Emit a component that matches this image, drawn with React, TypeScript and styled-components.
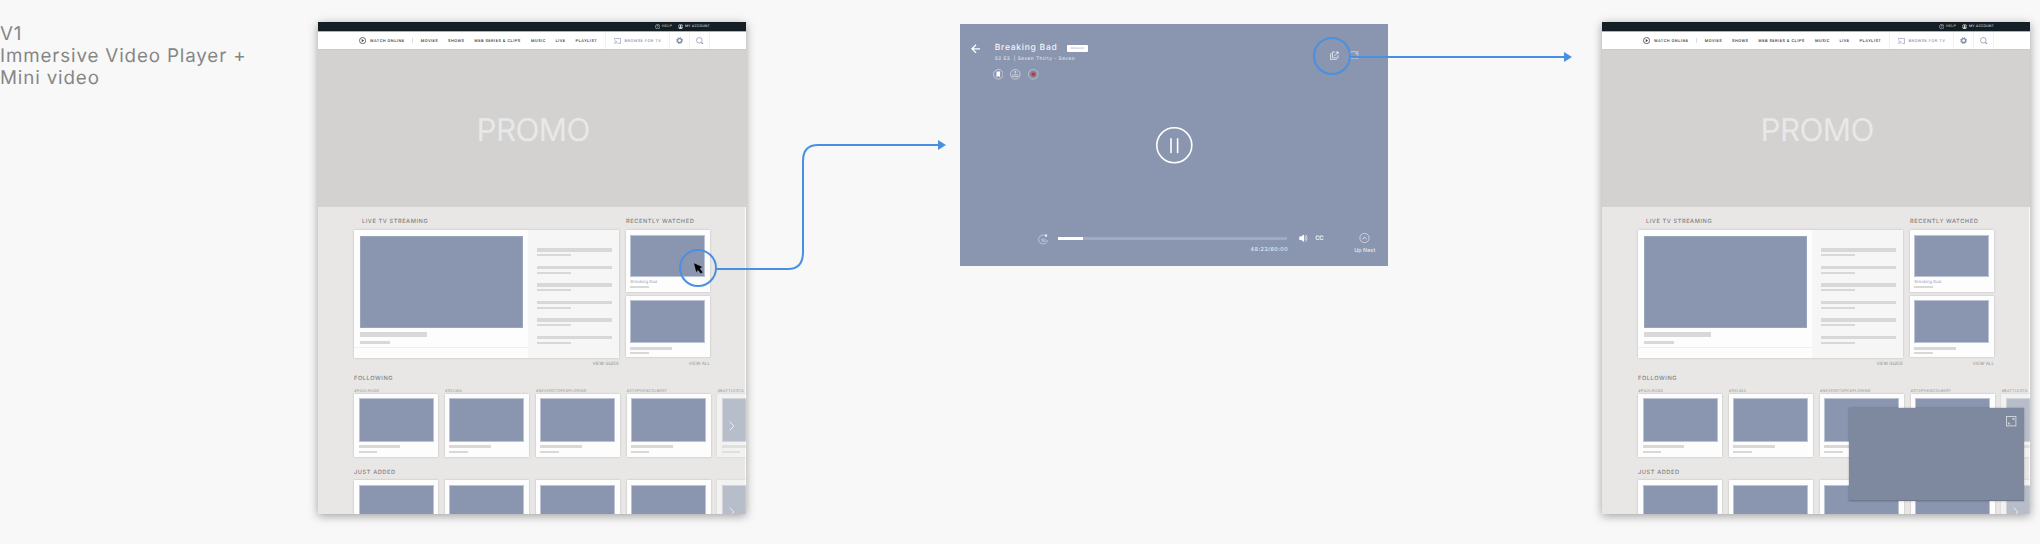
import React from "react";
import styled, { createGlobalStyle } from "styled-components";

const SLATE = "#8a95b0";
const ACCENT = "#4a90e2";

const GlobalStyle = createGlobalStyle`
  *, *::before, *::after { box-sizing: border-box; }
  html, body { margin: 0; padding: 0; background: #f8f8f8; }
  body {
    font-family: Inter, "Liberation Sans", sans-serif;
    text-rendering: geometricPrecision;
    overflow: hidden;
  }
  svg { display: block; flex: none; }
`;

const Canvas = styled.main`
  position: relative;
  display: flex;
  align-items: flex-start;
  width: 2040px;
  height: 544px;
  background: #f8f8f8;
  overflow: hidden;
`;

const Note = styled.h1`
  flex: none;
  width: 318px;
  margin: 0;
  padding-top: 23px;
  font-size: 18.8px;
  line-height: 22px;
  font-weight: 400;
  letter-spacing: 0.85px;
  color: #868686;
  white-space: nowrap;
`;

const Board = styled.section`
  position: relative;
  flex: none;
  width: 428px;
  height: 492px;
  margin-top: 22px;
  background: #e8e7e5;
  box-shadow: 0 2px 9px rgba(0, 0, 0, 0.36);
`;

const BoardClip = styled.div`
  height: 492px;
  overflow: hidden;
`;

const Text = styled.span<{ $w?: number; $size: number; $ls?: number; $color: string; $weight?: number }>`
  flex: none;
  display: block;
  width: ${(p) => (p.$w ? `${p.$w}px` : "auto")};
  font-size: ${(p) => p.$size}px;
  letter-spacing: ${(p) => p.$ls ?? 0}px;
  font-weight: ${(p) => p.$weight ?? 400};
  color: ${(p) => p.$color};
  white-space: nowrap;
`;

const TopBar = styled.div`
  display: flex;
  align-items: center;
  height: 9px;
  padding-left: 337px;
  background: #131e25;
  line-height: 9px;
  font-family: Roboto, sans-serif;
`;

const TopItem = styled.div<{ $w: number }>`
  display: flex;
  align-items: center;
  gap: 1.6px;
  width: ${(p) => p.$w}px;
`;

const Nav = styled.nav`
  display: flex;
  align-items: center;
  height: 18px;
  padding-left: 41px;
  border-top: 1px solid #aeb2b4;
  background: #fff;
  line-height: 17px;
  font-family: Roboto, sans-serif;
`;

const NavLinks = styled.div`
  display: flex;
  gap: 10.6px;
  width: 184.3px;
`;

const WatchOnline = styled.div`
  display: flex;
  align-items: center;
  gap: 3.8px;
  width: 53px;
`;

const Tick = styled.i`
  width: 1px;
  height: 5px;
  margin-right: 7.7px;
  background: #dcdcdc;
`;

const NavTool = styled.div<{ $w: number }>`
  display: flex;
  align-items: center;
  justify-content: center;
  gap: 3.3px;
  width: ${(p) => p.$w}px;
  height: 17px;
  border-left: 1px solid #f1f1f1;
`;

const NavEnd = styled.i`
  width: 1px;
  height: 17px;
  background: #f1f1f1;
`;

const Promo = styled.div`
  display: flex;
  align-items: center;
  justify-content: center;
  height: 158px;
  padding: 2px 0 0 2.5px;
  background: #d3d2d0;
  border-top: 1px solid #cbcac8;
  font-size: 31.3px;
  letter-spacing: -0.6px;
  color: #e8e8e8;
`;

const Body = styled.div`
  height: 307px;
  padding-left: 36px;
  border-right: 1px solid #fbfbfb;
  background: #e8e7e5;
`;

const Columns = styled.div`
  display: flex;
  gap: 6.7px;
`;

const Column = styled.div<{ $w: number }>`
  flex: none;
  width: ${(p) => p.$w}px;
`;

const ColumnTitle = styled.div<{ $indent?: number }>`
  height: 23px;
  padding: 10px 0 0 ${(p) => p.$indent ?? 0}px;
  line-height: 10px;
`;

const cardShadow = "0 0 2px rgba(0, 0, 0, 0.2)";

const LivePanel = styled.div`
  display: flex;
  height: 127.5px;
  background: #fdfdfd;
  box-shadow: ${cardShadow};
`;

const LiveMain = styled.div`
  width: 174.3px;
  padding: 6px 0 0 6px;
`;

const Thumb = styled.div<{ $w: number; $h: number; $edge: string }>`
  width: ${(p) => p.$w}px;
  height: ${(p) => p.$h}px;
  border: 1px solid ${(p) => p.$edge};
  background: ${SLATE};
`;

const Bar = styled.div<{ $w: number; $h: number; $mt: number }>`
  width: ${(p) => p.$w}px;
  height: ${(p) => p.$h}px;
  margin-top: ${(p) => p.$mt}px;
  background: #d8d8d8;
`;

const LiveFooter = styled.div`
  height: 10px;
  margin: 3.3px 0 0 -6px;
  border-top: 1px solid #efefef;
`;

const Schedule = styled.div`
  flex: 1;
  display: flex;
  flex-direction: column;
  gap: 9.5px;
  padding: 18.3px 0 0 9px;
  background: #f6f6f6;
`;

const ScheduleRow = styled.div`
  height: 8px;
`;

const CardFrame = styled.div<{ $h: number; $mt?: number }>`
  width: 84px;
  height: ${(p) => p.$h}px;
  margin-top: ${(p) => p.$mt ?? 0}px;
  padding: 4.5px 0 0 4.5px;
  background: #fdfdfd;
  box-shadow: ${cardShadow};
`;

const CardTitle = styled.div`
  height: 9.2px;
  padding-top: 2.9px;
  line-height: 6px;
`;

const ViewLink = styled.div`
  display: flex;
  justify-content: flex-end;
  height: 8.8px;
  padding-top: 4.2px;
  line-height: 6px;
`;

const SectionTitle = styled.div<{ $mt: number; $mb: number }>`
  height: 10px;
  margin: ${(p) => p.$mt}px 0 ${(p) => p.$mb}px;
  padding-top: 0.8px;
  line-height: 10px;
`;

const Strip = styled.div`
  display: flex;
  gap: 6.85px;
`;

const StripItem = styled.div<{ $faded?: boolean }>`
  position: relative;
  flex: none;
  width: 84px;
  ${(p) => p.$faded && `${CardFrame} { opacity: 0.5; }`}
`;

const Tag = styled.div`
  height: 6.7px;
  padding-top: 0.9px;
  line-height: 6px;
  font-family: Roboto, sans-serif;
`;

const ChevronSlot = styled.div<{ $top: number }>`
  position: absolute;
  left: 12px;
  top: ${(p) => p.$top}px;
`;

const MiniPlayer = styled.div`
  position: absolute;
  left: 246.5px;
  top: 386.3px;
  display: flex;
  justify-content: flex-end;
  width: 175px;
  height: 92.5px;
  padding: 8px 7px;
  background: #7e889e;
  border-bottom: 1px solid #6f788b;
  box-shadow: 0 0 2px rgba(0, 0, 0, 0.3);
`;

const Player = styled.section`
  flex: none;
  width: 428px;
  height: 242px;
  margin: 24px 214px 0;
  background: ${SLATE};
`;

const PlayerHeader = styled.header`
  display: flex;
  height: 102.5px;
  padding-left: 10.7px;
`;

const BackSlot = styled.div`
  width: 24px;
  padding-top: 20px;
`;

const Info = styled.div`
  width: 335.3px;
  padding-top: 18.8px;
`;

const TitleRow = styled.div`
  display: flex;
  align-items: center;
  gap: 10px;
  height: 12px;
  line-height: 13px;
`;

const Badge = styled.div`
  width: 21.3px;
  height: 7px;
  border-radius: 1px;
  background: #fff;
  line-height: 7px;
  text-align: center;
`;

const Subtitle = styled.div`
  margin-top: 1px;
  line-height: 6px;
`;

const Actions = styled.div`
  display: flex;
  gap: 7.15px;
  margin: 7.2px 0 0 -2px;
`;

const WindowTools = styled.div`
  display: flex;
  gap: 11.5px;
  padding-top: 26.6px;
`;

const PauseSlot = styled.div`
  display: flex;
  justify-content: center;
  height: 37px;
`;

const Controls = styled.footer`
  display: flex;
  align-items: flex-start;
  padding: 69px 0 0 78.3px;
`;

const Replay = styled.div`
  width: 19.7px;
  padding-top: 1px;
`;

const Timeline = styled.div`
  width: 229px;
  margin-right: 11.6px;
  padding-top: 4.8px;
`;

const Track = styled.div`
  height: 3px;
  background: #a1aac0;
`;

const Played = styled.div`
  width: 25.3px;
  height: 3px;
  background: #fff;
`;

const Time = styled.div`
  display: flex;
  justify-content: flex-end;
  margin-top: 6.8px;
  line-height: 6px;
`;

const Volume = styled.div`
  width: 16.7px;
  padding-top: 1.8px;
`;

const Captions = styled.div`
  width: 39px;
  line-height: 12px;
`;

const UpNext = styled.div`
  display: flex;
  flex-direction: column;
  align-items: center;
  gap: 4px;
  width: 21px;
  line-height: 7px;
`;

const Connectors = styled.svg`
  position: absolute;
  left: 0;
  top: 0;
`;

const NAV = [
  { t: "MOVIES", w: 16.7 },
  { t: "SHOWS", w: 15.6 },
  { t: "WEB SERIES & CLIPS", w: 46.3 },
  { t: "MUSIC", w: 13.8 },
  { t: "LIVE", w: 9.5 },
  { t: "PLAYLIST", w: 21 },
];
const TAGS = [
  { t: "#PAULRUDD", ls: 0.33 },
  { t: "#SELMA", ls: 0.3 },
  { t: "#NEVERSTOPEXPLORING", ls: 0.25 },
  { t: "#STEPHENCOLBERT", ls: 0.25 },
  { t: "#BATTLESTA", ls: 0.28 },
];

const NavText = ({ children, w, color = "#36414a" }: { children: string; w?: number; color?: string }) => (
  <Text $size={4} $ls={0.49} $weight={500} $w={w} $color={color}>{children}</Text>
);

const Heading = ({ children }: { children: string }) => (
  <Text $size={5.7} $ls={0.55} $weight={500} $color="#808285">{children}</Text>
);

const Chevron = ({ top }: { top: number }) => (
  <ChevronSlot $top={top}>
    <svg width="6" height="10" viewBox="0 0 6 10" fill="none" stroke="#eef0f4" strokeWidth="0.9">
      <path d="M0.8 0.6 L4.8 5 L0.8 9.4" />
    </svg>
  </ChevronSlot>
);

const VideoCard = ({ h, thumb, title, mt }: { h: number; thumb: number; title?: string; mt?: number }) => (
  <CardFrame $h={h} $mt={mt}>
    <Thumb $w={75} $h={thumb} $edge="#bcc3d3" />
    {title ? (
      <CardTitle><Text $size={4.3} $ls={-0.04} $color="#98a1bd">{title}</Text></CardTitle>
    ) : (
      <Bar $w={41.7} $h={3} $mt={3.8} />
    )}
    <Bar $w={18.4} $h={2} $mt={title ? 0 : 2.2} />
  </CardFrame>
);

function HomeBoard({ mini }: { mini?: boolean }) {
  return (
    <Board>
      <BoardClip>
        <TopBar>
          <TopItem $w={23.2}>
            <svg width="5.4" height="5.4" viewBox="0 0 10 10" fill="none" stroke="#b7bcbf" strokeWidth="1.2">
              <circle cx="5" cy="5" r="4.2" />
              <path d="M3.7 4 Q3.8 2.7 5 2.7 T6.2 4 Q6.2 4.7 5 5.3 V6.1 M5 6.9 V7.7" />
            </svg>
            <Text $size={3.7} $ls={0.3} $weight={500} $color="#b9bec1">HELP</Text>
          </TopItem>
          <TopItem $w={33}>
            <svg width="5.2" height="5.2" viewBox="0 0 10 10">
              <circle cx="5" cy="5" r="4.3" fill="none" stroke="#d4d7d9" strokeWidth="1.2" />
              <circle cx="5" cy="3.8" r="1.8" fill="#e2e4e5" />
              <path d="M2 8 Q2.4 5.6 5 5.6 T8 8 Q5 10.4 2 8Z" fill="#e2e4e5" />
            </svg>
            <Text $size={3.7} $ls={0.17} $weight={500} $color="#b9bec1">MY ACCOUNT</Text>
          </TopItem>
        </TopBar>
        <Nav>
          <WatchOnline>
            <svg width="7.2" height="7.2" viewBox="0 0 14 14">
              <circle cx="7" cy="7" r="6" fill="none" stroke="#35434b" strokeWidth="1.5" />
              <path d="M5.4 4 L9.8 7 L5.4 10Z" fill="#35434b" />
            </svg>
            <NavText>WATCH ONLINE</NavText>
          </WatchOnline>
          <Tick />
          <NavLinks>
            {NAV.map((n) => <NavText key={n.t} w={n.w}>{n.t}</NavText>)}
          </NavLinks>
          <NavTool $w={64.4}>
            <svg width="7" height="6" viewBox="0 0 14 12" fill="none" stroke="#8f99b8" strokeWidth="1.3">
              <path d="M1 3.5 V1 H13 V11 H8.5 M1 5.5 Q6.5 5.5 6.5 11 M1 8.2 Q3.8 8.2 3.8 11" />
              <path d="M0.6 11.4 h1.6 v-1.4 h-1.6z" fill="#8f99b8" stroke="none" />
            </svg>
            <NavText color="#8f9abb">BROWSE FOR TV</NavText>
          </NavTool>
          <NavTool $w={20}>
            <svg width="7.2" height="7.2" viewBox="0 0 14 14" fill="none" stroke="#7b87a9">
              <circle cx="7" cy="7" r="3.9" strokeWidth="2.2" />
              <circle cx="7" cy="7" r="5.9" strokeWidth="1.9" strokeDasharray="2.32 2.32" />
            </svg>
          </NavTool>
          <NavTool $w={20}>
            <svg width="7.6" height="7.6" viewBox="0 0 15 15" fill="none" stroke="#8690b0" strokeWidth="1.4">
              <circle cx="6.5" cy="6.5" r="5.5" />
              <path d="M10.8 10.8 L14 14" strokeWidth="2.2" />
            </svg>
          </NavTool>
          <NavEnd />
        </Nav>
        <Promo>PROMO</Promo>
        <Body>
          <Columns>
            <Column $w={265.3}>
              <ColumnTitle $indent={8}><Heading>LIVE TV STREAMING</Heading></ColumnTitle>
              <LivePanel>
                <LiveMain>
                  <Thumb $w={162.7} $h={92} $edge="#9aa4bb" />
                  <Bar $w={67} $h={5} $mt={4} />
                  <Bar $w={30} $h={3.2} $mt={3.8} />
                  <LiveFooter />
                </LiveMain>
                <Schedule>
                  {[0, 1, 2, 3, 4, 5].map((i) => (
                    <ScheduleRow key={i}>
                      <Bar $w={75} $h={3.6} $mt={0} />
                      <Bar $w={33.3} $h={2} $mt={2.2} />
                    </ScheduleRow>
                  ))}
                </Schedule>
              </LivePanel>
              <ViewLink><Text $size={4.5} $ls={0.03} $color="#8f8f8f">VIEW GUIDE</Text></ViewLink>
            </Column>
            <Column $w={84}>
              <ColumnTitle><Heading>RECENTLY WATCHED</Heading></ColumnTitle>
              <VideoCard h={61.7} thumb={42.6} title="Breaking Bad" />
              <VideoCard h={61.5} thumb={42.6} mt={4.3} />
              <ViewLink><Text $size={4.5} $ls={0.04} $color="#8f8f8f">VIEW ALL</Text></ViewLink>
            </Column>
          </Columns>
          <SectionTitle $mt={7.4} $mb={3.3}><Heading>FOLLOWING</Heading></SectionTitle>
          <Strip>
            {TAGS.map(({ t, ls }, i) => (
              <StripItem key={t} $faded={i === 4}>
                <Tag><Text $size={4} $ls={ls} $color="#999999">{t}</Text></Tag>
                <VideoCard h={63.3} thumb={43.5} />
                {i === 4 && <Chevron top={34} />}
              </StripItem>
            ))}
          </Strip>
          <SectionTitle $mt={9.8} $mb={3.7}><Heading>JUST ADDED</Heading></SectionTitle>
          <Strip>
            {TAGS.map(({ t }, i) => (
              <StripItem key={t} $faded={i === 4}>
                <VideoCard h={63.3} thumb={43.5} />
                {i === 4 && <Chevron top={27} />}
              </StripItem>
            ))}
          </Strip>
        </Body>
      </BoardClip>
      {mini && (
        <MiniPlayer>
          <svg width="10.4" height="10.4" viewBox="0 0 21 21" fill="none" stroke="#d5d9e1" strokeWidth="1.8">
            <rect x="1" y="1" width="19" height="19" />
            <path d="M12.5 4.5 H16.5 V8.5Z M4.5 12.5 V16.5 H8.5Z" fill="#d5d9e1" strokeWidth="0.6" />
            <path d="M16 5 L13 8 M5 16 L8 13" strokeWidth="1" />
          </svg>
        </MiniPlayer>
      )}
    </Board>
  );
}

function VideoPlayer() {
  return (
    <Player>
      <PlayerHeader>
        <BackSlot>
          <svg width="9.6" height="9.6" viewBox="0 0 20 20" fill="none" stroke="#fff" strokeWidth="2.7">
            <path d="M19.5 10 H2.5 M10.5 1.5 L2 10 L10.5 18.5" />
          </svg>
        </BackSlot>
        <Info>
          <TitleRow>
            <Text $size={8.5} $ls={0.75} $w={62} $weight={500} $color="#f2f4f8">Breaking Bad</Text>
            <Badge><Text $size={2.7} $ls={0.05} $color="#9aa3bd">Attribution</Text></Badge>
          </TitleRow>
          <Subtitle><Text $size={4.8} $ls={0.47} $weight={500} $color="#dfe3ea">S2 E3&nbsp; | Seven Thirty - Seven</Text></Subtitle>
          <Actions>
            <svg width="10.6" height="10.6" viewBox="0 0 22 22">
              <circle cx="11" cy="11" r="10" fill="none" stroke="#dfe3eb" strokeWidth="1.4" />
              <path d="M7.3 5 H14.7 V17 L11 14.6 L7.3 17Z" fill="#fff" />
            </svg>
            <svg width="10.6" height="10.6" viewBox="0 0 22 22" fill="none" stroke="#e3e6ed" strokeWidth="1.5">
              <circle cx="11" cy="11" r="10" strokeWidth="1.4" />
              <path d="M11 4.5 V10 M8.5 7 L11 4.5 L13.5 7 M6.5 11 L5.2 15.5 H16.8 L15.5 11 M8 12 H14" />
            </svg>
            <svg width="10.6" height="10.6" viewBox="0 0 22 22">
              <circle cx="11" cy="11" r="10" fill="none" stroke="#c9cedb" strokeWidth="1.4" />
              <circle cx="11" cy="11" r="6.3" fill="#8b7d92" />
              <circle cx="11" cy="11" r="3.6" fill="#c9302e" />
            </svg>
          </Actions>
        </Info>
        <WindowTools>
          <svg width="9" height="9.4" viewBox="0 0 18 19" fill="none" stroke="#e2e5ec" strokeWidth="1.9">
            <path d="M10.5 2 H5 V14 H16 V8.5 M2.5 5 H1.2 V17.8 H12.5 V16.3 M8.5 10.5 L16 3" />
            <path d="M11.8 1.4 H17 V6.6Z" fill="#fff" stroke="none" />
          </svg>
          <svg width="8.4" height="8.4" viewBox="0 0 17 17" fill="none" stroke="#ccd1dc" strokeWidth="1.7">
            <rect x="1" y="1.5" width="15" height="14.5" />
            <path d="M10.5 3.8 H13.8 V7.1Z" fill="#dfe3ea" strokeWidth="0.8" />
          </svg>
        </WindowTools>
      </PlayerHeader>
      <PauseSlot>
        <svg width="37" height="37" viewBox="0 0 37 37" fill="none" stroke="#fff" strokeLinecap="round">
          <circle cx="18.3" cy="18.3" r="17.5" strokeWidth="1.6" />
          <path d="M15 11.8 V25.6 M21.6 11.8 V25.6" strokeWidth="1.6" />
        </svg>
      </PauseSlot>
      <Controls>
        <Replay>
          <svg width="10.6" height="11" viewBox="0 0 21 22" fill="none" stroke="#d5dae4" strokeWidth="1.4">
            <path d="M14.5 3.2 A9 9 0 1 0 19 12.5" />
            <path d="M13.5 0.8 H18 V5.5 H14.5Z" fill="#eef0f4" stroke="none" />
            <text x="10.6" y="15" fontSize="9" fontFamily="Inter, sans-serif" textAnchor="middle" fill="#e6e9ef" stroke="none">10</text>
          </svg>
        </Replay>
        <Timeline>
          <Track><Played /></Track>
          <Time><Text $size={5.4} $ls={0.43} $w={36.4} $weight={500} $color="#e6e9ef">48:23/60:00</Text></Time>
        </Timeline>
        <Volume>
          <svg width="9" height="8.4" viewBox="0 0 18 17" fill="none" stroke="#e8ebf0" strokeWidth="1.5">
            <path d="M0.5 5 H4.5 L10 0.8 V16.2 L4.5 12 H0.5Z" fill="#fff" stroke="none" />
            <path d="M11.8 4.5 Q14 8.5 11.8 12.5 M13.8 1.5 Q18.6 8.5 13.8 15.5" />
          </svg>
        </Volume>
        <Captions><Text $size={6} $weight={600} $ls={-0.5} $color="#f4f5f8">CC</Text></Captions>
        <UpNext>
          <svg width="11" height="11" viewBox="0 0 22 22" fill="none" stroke="#e6e9ef">
            <circle cx="11" cy="10" r="9.3" strokeWidth="1.4" />
            <path d="M6.8 12 L11 8.4 L15.2 12" strokeWidth="2" />
          </svg>
          <Text $size={5.4} $ls={0.04} $weight={500} $color="#e6e9ef">Up Next</Text>
        </UpNext>
      </Controls>
    </Player>
  );
}

export default function App() {
  return (
    <>
      <GlobalStyle />
      <Canvas>
        <Note>V1<br />Immersive Video Player +<br />Mini video</Note>
        <HomeBoard />
        <VideoPlayer />
        <HomeBoard mini />
        <Connectors width="2040" height="544" viewBox="0 0 2040 544" fill="none" stroke={ACCENT} strokeWidth="2">
          <circle cx="698" cy="268" r="18" />
          <path d="M716 269 H788 Q803 269 803 252 V161 Q803 145 818 145 H939" />
          <path d="M938 140 L946 145 L938 150Z" fill={ACCENT} stroke="none" />
          <path d="M694 263.2 L702.3 267 L699.8 268.6 L702.7 272.2 L700.8 273.6 L698 270 L696.3 272.2Z" fill="#000" stroke="none" />
          <circle cx="1332" cy="56" r="18" />
          <path d="M1350 57 H1565" />
          <path d="M1564 52 L1572 57 L1564 62Z" fill={ACCENT} stroke="none" />
        </Connectors>
      </Canvas>
    </>
  );
}
